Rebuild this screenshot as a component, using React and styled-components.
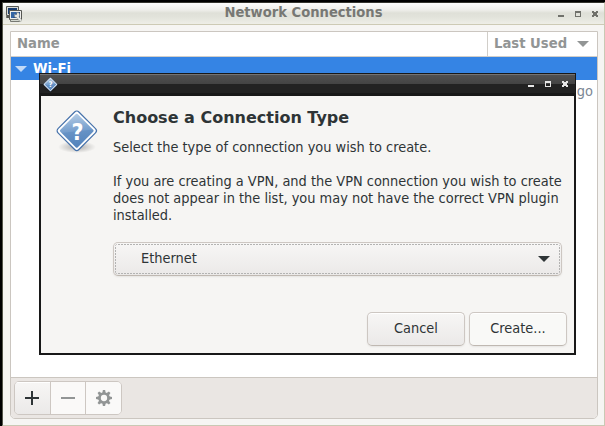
import React from 'react';
import styled, { createGlobalStyle, css } from 'styled-components';

const Global = createGlobalStyle`
  * { box-sizing: border-box; }
  html, body { margin: 0; background: #000; overflow: hidden; }
  body {
    font-family: "DejaVu Sans Condensed", "DejaVu Sans", sans-serif;
    font-stretch: condensed;
    font-size: 14.42px;
    color: #2e3436;
    cursor: default;
  }
  button { font: inherit; color: inherit; padding: 0; margin: 0; }
  svg { display: block; flex: none; }
`;

const Desktop = styled.div`
  position: relative;
  width: 605px;
  height: 426px;
  padding: 2px 0 0 2px;
  background: #000;
`;

const Window = styled.section`
  display: flex;
  flex-direction: column;
  width: 603px;
  height: 424px;
  border: 1px solid #c9c9b4;
  border-top-color: #35352f;
  border-left-color: #55564b;
  background: #f6f5f3;
`;

const TitleBar = styled.header`
  display: flex;
  align-items: center;
  height: 22px;
  flex: none;
  padding: 0 5px 0 3px;
  border-bottom: 1px solid #cdcab5;
  background: linear-gradient(#fdfdfc 0, #eeeeea 7px, #dfe0d8 10px, #e2e3db 14px, #eeeee7 21px);
`;

const Title = styled.h1`
  flex: 1;
  margin: 0 0 4px;
  padding-left: 28px;
  text-align: center;
  font-size: 14.6px;
  line-height: 16px;
  font-weight: bold;
  color: #777874;
`;

const Controls = styled.div`
  display: flex;
  gap: 9px;
  color: ${(p) => p.$color};
`;

const Body = styled.main`
  flex: 1;
  display: flex;
  padding: 6px 6px 6px 7px;
`;

const Panel = styled.div`
  flex: 1;
  display: flex;
  flex-direction: column;
  border: 1px solid #cbc6c0;
  border-radius: 0 0 5px 5px;
  overflow: hidden;
  background: #fff;
`;

const ListHeader = styled.div`
  display: flex;
  height: 25px;
  flex: none;
  border-bottom: 1px solid #d1cec9;
  font-size: 14.7px;
  font-weight: bold;
  line-height: 21px;
  color: #929595;
`;

const NameColumn = styled.div`
  flex: 1;
  padding-left: 6px;
`;

const DateColumn = styled.div`
  display: flex;
  justify-content: space-between;
  width: 110px;
  padding: 0 8px 0 6px;
  border-left: 1px solid #d1cec9;
  white-space: nowrap;
  svg { margin-top: 9px; }
`;

const GroupRow = styled.div`
  display: flex;
  gap: 6px;
  height: 23px;
  flex: none;
  padding-left: 4px;
  background: #3584e4;
  color: #fff;
  font-size: 14.7px;
  font-weight: bold;
  line-height: 21px;
  svg { margin-top: 9px; }
`;

const Row = styled.div`
  display: flex;
  justify-content: flex-end;
  padding-right: 4px;
  line-height: 23px;
  color: #7b8794;
`;

const Toolbar = styled.footer`
  display: flex;
  height: 41px;
  margin-top: auto;
  flex: none;
  padding: 3px;
  border-top: 1px solid #cbc6c0;
  background: #eae6e3;
`;

const ToolGroup = styled.div`
  display: flex;
  width: 108px;
  height: 34px;
  border: 1px solid #cdc7c2;
  border-radius: 5px;
  overflow: hidden;
`;

const raised = css`
  background: linear-gradient(#f7f6f5, #ebe9e8);
  box-shadow: inset 0 1px #fff;
`;

const ToolButton = styled.button`
  display: flex;
  align-items: center;
  justify-content: center;
  flex: 1;
  border: 0;
  background: #faf9f8;
  color: #929595;
  ${(p) => p.$active && css`${raised} color: #2e3436;`}
  & + & { border-left: 1px solid #cdc7c2; }
`;

const Dialog = styled.section`
  position: absolute;
  left: 39px;
  top: 73px;
  display: flex;
  flex-direction: column;
  width: 537px;
  height: 282px;
  border: 2px solid #181818;
  border-top-width: 1px;
  background: #f6f5f3;
`;

const DialogBar = styled.header`
  display: flex;
  align-items: center;
  justify-content: space-between;
  height: 22px;
  flex: none;
  margin: 0 -1px;
  padding: 0 6px 2px 3px;
  background: linear-gradient(#747474 0 1px, #505050 1px, #434343 10px, #222 10px 19px, #181818 19px);
`;

const DialogBody = styled.div`
  display: flex;
  gap: 14px;
  padding: 13px 12px 0 14px;
`;

const Content = styled.div`
  flex: 1;
`;

const Heading = styled.h2`
  margin: -1px 0 12px;
  font-family: "DejaVu Sans", sans-serif;
  font-stretch: normal;
  font-size: 16px;
  line-height: 19px;
  font-weight: bold;
`;

const Message = styled.p`
  margin: 0 0 17px;
  line-height: 17px;
  white-space: pre;
`;

const Select = styled.button`
  display: flex;
  width: 449px;
  height: 34px;
  margin-top: 18px;
  padding: 1px;
  border: 1px solid #cdc7c2;
  border-bottom-color: #bfb8b1;
  border-radius: 5px;
  box-shadow: 0 1px 2px rgba(0, 0, 0, 0.07);
  background: linear-gradient(#f7f6f5, #ebe9e8);
`;

const dashX = 'repeating-linear-gradient(90deg, #b3b3b2 0 2px, transparent 2px 3px)';
const dashY = 'repeating-linear-gradient(#b3b3b2 0 2px, transparent 2px 3px)';

const SelectFocus = styled.span`
  flex: 1;
  display: flex;
  justify-content: space-between;
  height: 30px;
  padding: 0 10px 0 26px;
  line-height: 29px;
  svg { margin-top: 12px; }
  border-radius: 3px;
  background:
    ${dashX} top / 100% 1px no-repeat,
    ${dashX} bottom / 100% 1px no-repeat,
    ${dashY} left / 1px 100% no-repeat,
    ${dashY} right / 1px 100% no-repeat;
`;

const Actions = styled.div`
  display: flex;
  justify-content: flex-end;
  gap: 4px;
  margin-top: auto;
  padding: 0 7px 7px;
`;

const Button = styled.button`
  width: 98px;
  height: 34px;
  padding-bottom: 2px;
  border: 1px solid #cdc7c2;
  border-bottom-color: #bfb8b1;
  border-radius: 5px;
  background: ${(p) => (p.$light ? '#f9f9f7' : 'linear-gradient(#f7f6f5, #ebe9e8)')};
  box-shadow: inset 0 1px #fff, 0 1px 2px rgba(0, 0, 0, 0.07);
`;

const Arrow = ({ color }) => (
  <svg width="12" height="6" viewBox="0 0 12 6"><path d="M0 0H12L6 6Z" fill={color} /></svg>
);

const WindowControls = ({ color }) => (
  <Controls $color={color}>
    <svg width="8" height="8" viewBox="0 0 8 8"><path d="M1 5h6v2H1z" fill="currentColor" /></svg>
    <svg width="8" height="8" viewBox="0 0 8 8" shapeRendering="crispEdges"><path fillRule="evenodd" d="M1 1h6v6H1zM2 3v3h4V3z" fill="currentColor" /></svg>
    <svg width="8" height="8" viewBox="0 0 8 8" shapeRendering="crispEdges"><path d="M1 1h2v1h2v-1h2v2h-1v2h1v2h-2v-1h-2v1h-2v-2h1v-2h-1z" fill="currentColor" /></svg>
  </Controls>
);

const NetworkIcon = () => (
  <svg width="16" height="16" viewBox="0 0 16 16">
    <path d="M.5.5h12v9H.5zM.5 10.500h5v1h-5z" fill="#d8dad5" stroke="#555753" />
    <path d="M2 2h9v6H2z" fill="#193d70" />
    <path d="M3.500 4.500h12v9h-12z" fill="#eeeeec" stroke="#555753" />
    <path d="M5 6h9v6H5z" fill="#204a87" />
    <path d="M5 6h6L7 12H5z" fill="#3465a4" />
    <path d="M4.500 13.500h9v2h-9z" fill="#d3d7cf" stroke="#777973" />
    <path d="M8.500 8l1.500 1 1-1-.5-1.500h2l1 1.500v2l-.5 1 3 3-1 1.500-1.500-.5-3-3.500-2-.5z" fill="#e6e7e3" stroke="#777973" strokeWidth=".4" />
  </svg>
);

const QuestionIcon = ({ size, id }) => (
  <svg width={size} height={size} viewBox="0 0 44 44">
    <defs>
      <linearGradient id={`${id}-fill`} x1="0" y1="0" x2="1" y2=".8">
        <stop offset="0" stopColor="#b4cce5" />
        <stop offset=".55" stopColor="#759ecd" />
        <stop offset=".58" stopColor="#6692c5" />
        <stop offset="1" stopColor="#5585bd" />
      </linearGradient>
      <radialGradient id={`${id}-shadow`}>
        <stop offset="0" stopColor="#000" stopOpacity=".3" />
        <stop offset="1" stopColor="#000" stopOpacity="0" />
      </radialGradient>
    </defs>
    <ellipse cx="22" cy="38" rx="19" ry="6" fill={`url(#${id}-shadow)`} />
    <rect x="7" y="7" width="29.500" height="29.500" rx="3" transform="rotate(45 21.750 21.750)" fill="#fff" stroke="#4672ab" strokeWidth="1.200" />
    <rect x="9.400" y="9.400" width="24.700" height="24.700" rx="1.500" transform="rotate(45 21.750 21.750)" fill={`url(#${id}-fill)`} />
    <text x="22.500" y="30.500" textAnchor="middle" fill="#fff" fontFamily="DejaVu Sans" fontWeight="bold" fontSize="23">?</text>
  </svg>
);

const teeth = [0, 45, 90, 135, 180, 225, 270, 315];

const GearIcon = () => (
  <svg width="16" height="16" viewBox="0 0 16 16" fill="currentColor">
    {teeth.map((a) => <path key={a} d="M6.900 0h2.200l.8 4H6.100z" transform={`rotate(${a} 8 8)`} />)}
    <circle cx="8" cy="8" r="4.500" fill="none" stroke="currentColor" strokeWidth="2.700" />
  </svg>
);

export default function App() {
  return (
    <Desktop>
      <Global />
      <Window>
        <TitleBar>
          <NetworkIcon />
          <Title>Network Connections</Title>
          <WindowControls color="#70716b" />
        </TitleBar>
        <Body>
          <Panel>
            <ListHeader>
              <NameColumn>Name</NameColumn>
              <DateColumn>Last Used <Arrow color="#929595" /></DateColumn>
            </ListHeader>
            <GroupRow><Arrow color="#c2daf7" />Wi-Fi</GroupRow>
            <Row>go</Row>
            <Toolbar>
              <ToolGroup>
                <ToolButton $active aria-label="Add">
                  <svg width="14" height="14" viewBox="0 0 14 14"><path d="M6 0h2v6h6v2H8v6H6V8H0V6h6z" fill="currentColor" /></svg>
                </ToolButton>
                <ToolButton aria-label="Remove">
                  <svg width="14" height="14" viewBox="0 0 14 14"><path d="M0 6h14v2H0z" fill="currentColor" /></svg>
                </ToolButton>
                <ToolButton aria-label="Settings"><GearIcon /></ToolButton>
              </ToolGroup>
            </Toolbar>
          </Panel>
        </Body>
      </Window>
      <Dialog role="dialog">
        <DialogBar>
          <QuestionIcon size={15} id="small" />
          <WindowControls color="#e6e6e6" />
        </DialogBar>
        <DialogBody>
          <QuestionIcon size={44} id="large" />
          <Content>
            <Heading>Choose a Connection Type</Heading>
            <Message>Select the type of connection you wish to create.</Message>
            <Message>{'If you are creating a VPN, and the VPN connection you wish to create\ndoes not appear in the list, you may not have the correct VPN plugin\ninstalled.'}</Message>
            <Select>
              <SelectFocus>Ethernet <Arrow color="#2e3436" /></SelectFocus>
            </Select>
          </Content>
        </DialogBody>
        <Actions>
          <Button>Cancel</Button>
          <Button $light>Create...</Button>
        </Actions>
      </Dialog>
    </Desktop>
  );
}
